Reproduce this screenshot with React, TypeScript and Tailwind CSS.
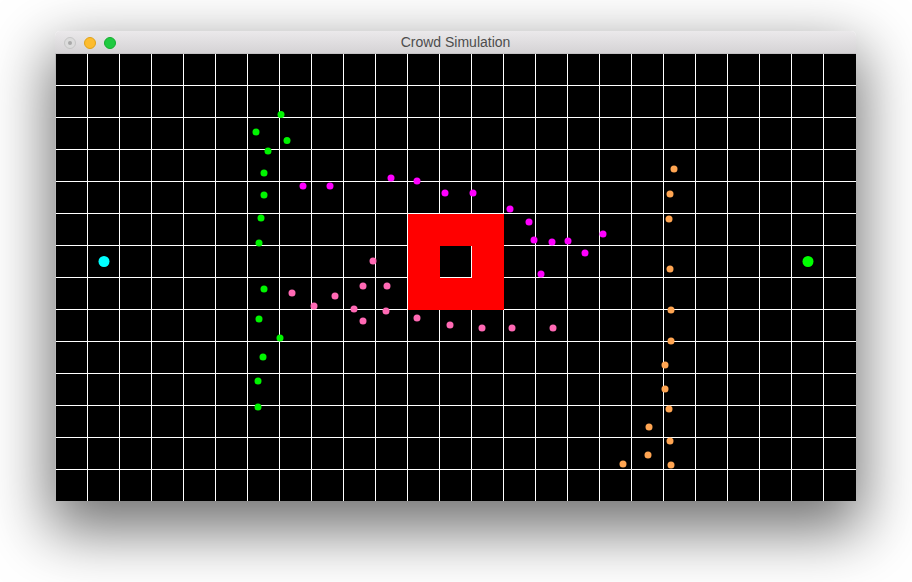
const GREEN: [number, number][] = [
  [281, 114.5], [256, 132], [287, 140.5], [268, 151], [264, 173], [264, 195],
  [261, 218], [259, 243], [264, 289], [259, 319], [280, 338], [263, 357],
  [258, 381], [258, 407],
];

const MAGENTA: [number, number][] = [
  [303, 186], [330, 186], [391, 178], [417, 181], [445, 193], [473, 193],
  [510, 209], [529, 222], [534, 240], [552, 242], [568, 241], [603, 234],
  [585, 253], [541, 274],
];

const PINK: [number, number][] = [
  [373, 261], [292, 293], [335, 296], [314, 306], [363, 286], [387, 286],
  [354, 309], [386, 311], [363, 321], [417, 318], [450, 325], [482, 328],
  [512, 328], [553, 328],
];

const ORANGE: [number, number][] = [
  [674, 169], [670, 194], [669, 219], [670, 269], [671, 310], [671, 341],
  [665, 365], [665, 389], [669, 409], [649, 427], [670, 441], [648, 455],
  [623, 464], [671, 465],
];

// page coords -> canvas coords
const OX = 56;
const OY = 54;

function Dots({ pts, color }: { pts: [number, number][]; color: string }) {
  return (
    <>
      {pts.map(([x, y], i) => (
        <circle key={i} cx={x - OX} cy={y - OY} r={3.5} fill={color} />
      ))}
    </>
  );
}

function Lights() {
  return (
    <div className="mt-[2px] flex items-center gap-2 pl-[9px]">
      <div className="flex h-3 w-3 items-center justify-center rounded-full border border-[#c6c6c6] bg-[#dcdcdc]">
        <div className="h-[4px] w-[4px] rounded-full bg-[#a9a9a9]" />
      </div>
      <div className="h-3 w-3 rounded-full border border-[#e0a218] bg-[#fdbc2e]" />
      <div className="h-3 w-3 rounded-full border border-[#14ae2e] bg-[#1fca41]" />
    </div>
  );
}

function Canvas() {
  const vlines = Array.from({ length: 24 }, (_, k) => 31 + 32 * k);
  const hlines = Array.from({ length: 14 }, (_, k) => 31 + 32 * k);
  return (
    <svg width={800} height={447} className="block bg-black">
      {vlines.map((x) => (
        <rect key={"v" + x} x={x} y={0} width={1} height={447} fill="#ffffff" />
      ))}
      {hlines.map((y) => (
        <rect key={"h" + y} x={0} y={y} width={800} height={1} fill="#ffffff" />
      ))}
      {/* obstacle */}
      <path
        d="M352 160 H448 V256 H352 Z M384 192 V224 H416 V192 Z"
        fill="#ff0000"
        fillRule="evenodd"
      />
      <Dots pts={GREEN} color="#00f500" />
      <Dots pts={MAGENTA} color="#ff00ff" />
      <Dots pts={PINK} color="#ff69b4" />
      <Dots pts={ORANGE} color="#ffa552" />
      {/* start / goal */}
      <circle cx={104 - OX} cy={261.5 - OY} r={5.5} fill="#00ffff" />
      <circle cx={808 - OX} cy={261.5 - OY} r={5.5} fill="#00ff00" />
    </svg>
  );
}

export default function App() {
  return (
    <div className="h-[582px] w-[912px] overflow-hidden bg-white pl-[55px] pt-[31px]">
      <div className="w-[801px] rounded-t-[5px] shadow-[0_24px_60px_6px_rgba(0,0,0,0.55)]">
        <div className="relative flex h-[23px] items-center rounded-t-[5px] border-b border-[#c4c2c4] bg-linear-to-b from-[#ebe9eb] to-[#d5d3d5]">
          <Lights />
          <div className="absolute inset-0 flex items-center justify-center pt-[1px] text-[14px] text-[#4d4d4d] font-['Liberation_Sans',Arial,sans-serif]">
            Crowd Simulation
          </div>
        </div>
        <div className="flex border-l border-[#b8b8b8]">
          <Canvas />
        </div>
      </div>
    </div>
  );
}
